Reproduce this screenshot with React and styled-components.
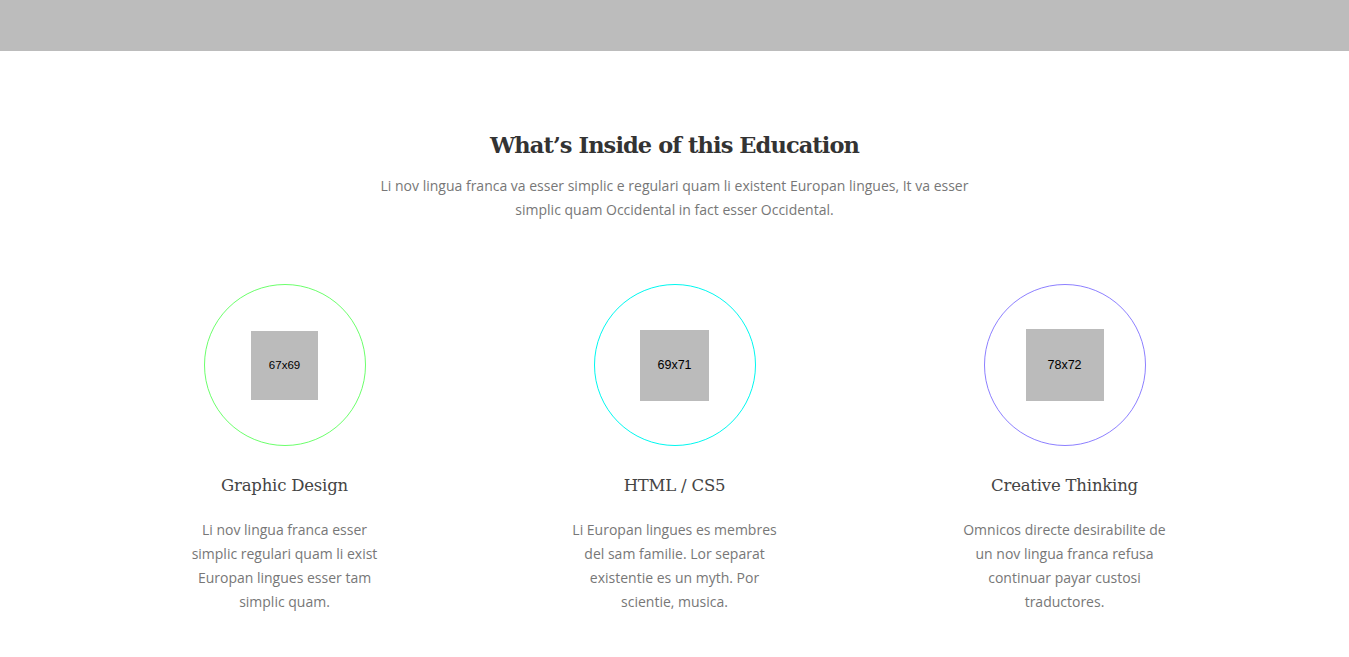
import styled, { createGlobalStyle } from "styled-components";

const GlobalStyle = createGlobalStyle`
  html, body {
    margin: 0;
    padding: 0;
    background: #fff;
  }
  body {
    font-family: "Open Sans", "Liberation Sans", sans-serif;
  }
`;

const TopBar = styled.div`
  height: 51px;
  background: #bcbcbc;
`;

const Section = styled.section`
  padding: 77px 0 40px;
`;

const Container = styled.div`
  width: 1170px;
  margin: 0 auto;
`;

const Heading = styled.h2`
  margin: 0;
  text-align: center;
  font-family: "DejaVu Serif", "Liberation Serif", serif;
  font-weight: bold;
  font-size: 22.5px;
  line-height: 34px;
  letter-spacing: -0.9px;
  color: #333;
`;

const Lead = styled.p`
  width: 600px;
  margin: 12px auto 0;
  text-align: center;
  font-size: 14px;
  line-height: 24px;
  color: #777;
`;

const Features = styled.div`
  display: grid;
  grid-template-columns: repeat(3, 1fr);
  margin-top: 62px;
`;

const Feature = styled.div`
  display: flex;
  flex-direction: column;
  align-items: center;
  text-align: center;
`;

const Circle = styled.div`
  width: 160px;
  height: 160px;
  border: 1px solid ${(p) => p.$color};
  border-radius: 50%;
  display: flex;
  align-items: center;
  justify-content: center;
`;

const Placeholder = styled.div`
  width: ${(p) => p.$w}px;
  height: ${(p) => p.$h}px;
  background: #bbb;
  display: flex;
  align-items: center;
  justify-content: center;
  font-family: "Liberation Sans", Arial, sans-serif;
  font-size: ${(p) => p.$fs}px;
  color: #000;
`;

const Title = styled.h3`
  margin: 27px 0 0;
  font-family: "DejaVu Serif", "Liberation Serif", serif;
  font-weight: normal;
  font-size: 16.5px;
  line-height: 26px;
  letter-spacing: -0.2px;
  color: #444;
`;

const Text = styled.p`
  width: 208px;
  margin: 19px 0 0;
  font-size: 14px;
  line-height: 24px;
  color: #777;
`;

const features = [
  {
    color: "#6cff6c",
    w: 67,
    h: 69,
    fs: 11.5,
    title: "Graphic Design",
    text: "Li nov lingua franca esser simplic regulari quam li exist Europan lingues esser tam simplic quam.",
  },
  {
    color: "#00f8f0",
    w: 69,
    h: 71,
    fs: 12.5,
    title: "HTML / CS5",
    text: "Li Europan lingues es membres del sam familie. Lor separat existentie es un myth. Por scientie, musica.",
  },
  {
    color: "#8d80ff",
    w: 78,
    h: 72,
    fs: 12.5,
    title: "Creative Thinking",
    text: "Omnicos directe desirabilite de un nov lingua franca refusa continuar payar custosi traductores.",
  },
];

export default function App() {
  return (
    <>
      <GlobalStyle />
      <TopBar />
      <Section>
        <Container>
          <Heading>What’s Inside of this Education</Heading>
          <Lead>
            Li nov lingua franca va esser simplic e regulari quam li existent
            Europan lingues, It va esser simplic quam Occidental in fact esser
            Occidental.
          </Lead>
          <Features>
            {features.map((f) => (
              <Feature key={f.title}>
                <Circle $color={f.color}>
                  <Placeholder $w={f.w} $h={f.h} $fs={f.fs}>
                    {f.w}x{f.h}
                  </Placeholder>
                </Circle>
                <Title>{f.title}</Title>
                <Text>{f.text}</Text>
              </Feature>
            ))}
          </Features>
        </Container>
      </Section>
    </>
  );
}
